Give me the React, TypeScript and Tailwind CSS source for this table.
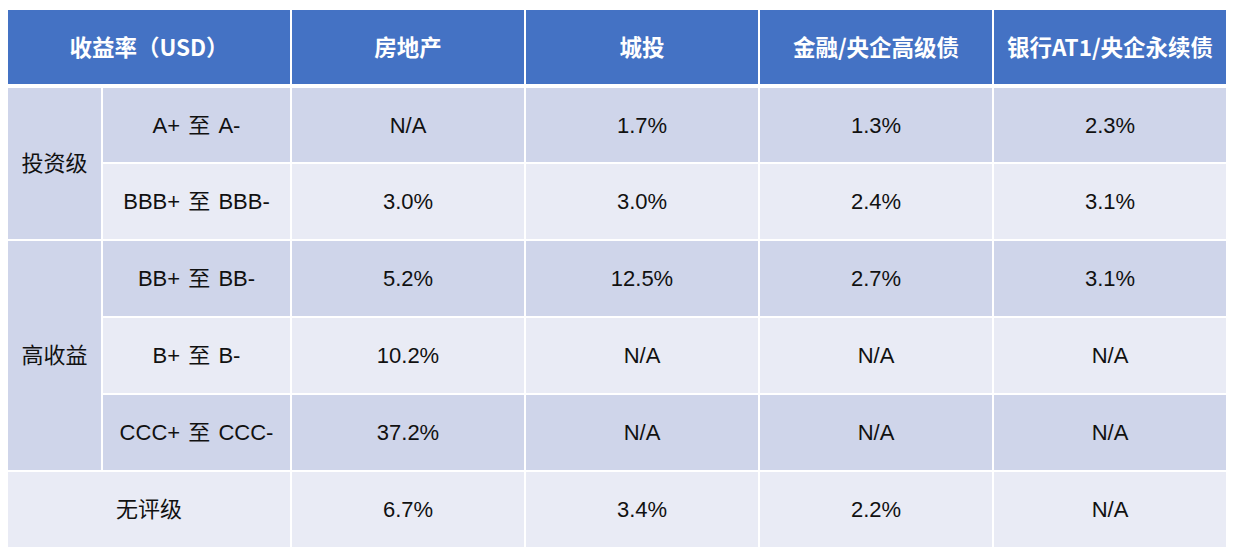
const headers = ["房地产", "城投", "金融/央企高级债", "银行AT1/央企永续债"];

const rows = [
  { label: "A+ 至 A-", values: ["N/A", "1.7%", "1.3%", "2.3%"] },
  { label: "BBB+ 至 BBB-", values: ["3.0%", "3.0%", "2.4%", "3.1%"] },
  { label: "BB+ 至 BB-", values: ["5.2%", "12.5%", "2.7%", "3.1%"] },
  { label: "B+ 至 B-", values: ["10.2%", "N/A", "N/A", "N/A"] },
  { label: "CCC+ 至 CCC-", values: ["37.2%", "N/A", "N/A", "N/A"] },
];

const font = { fontFamily: '"Liberation Sans", "Noto Sans CJK SC", sans-serif' };
const headFont = { fontFamily: '"Noto Sans CJK SC", sans-serif' };

function rowBg(i: number) {
  return i % 2 === 0 ? "bg-[#cfd5ea]" : "bg-[#e9ebf5]";
}

function Label({ text }: { text: string }) {
  const [from, to] = text.split(" 至 ");
  return (
    <span className="whitespace-pre">
      {from} <span className="px-[2px]">至</span> {to}
    </span>
  );
}

export default function App() {
  return (
    <div className="w-[1238px] h-[558px] bg-white pt-[10px] pl-[8px]" style={font}>
      <div
        className="grid grid-cols-[93px_187px_232px_232px_232px_232px] gap-x-[2px] mb-[4px]"
        style={headFont}
      >
        <div className="col-span-2 h-[74px] bg-[#4472c4] flex items-center justify-center text-white text-[22.5px] font-bold">
          收益率（USD）
        </div>
        {headers.map((h) => (
          <div key={h} className="h-[74px] bg-[#4472c4] flex items-center justify-center text-white text-[22.5px] font-bold">
            {h}
          </div>
        ))}
      </div>
      <div className="grid grid-cols-[93px_187px_232px_232px_232px_232px] grid-rows-[74px_75px_75px_75px_75px_75px] gap-x-[2px] gap-y-[2px] text-[22px] text-[#111]">
        <div className="row-span-2 bg-[#cfd5ea] flex items-center justify-center">投资级</div>
        <div className={`${rowBg(0)} flex items-center justify-center`}><Label text={rows[0].label} /></div>
        {rows[0].values.map((v, j) => (
          <div key={j} className={`${rowBg(0)} flex items-center justify-center`}>{v}</div>
        ))}
        <div className={`${rowBg(1)} flex items-center justify-center`}><Label text={rows[1].label} /></div>
        {rows[1].values.map((v, j) => (
          <div key={j} className={`${rowBg(1)} flex items-center justify-center`}>{v}</div>
        ))}
        <div className="row-span-3 bg-[#cfd5ea] flex items-center justify-center">高收益</div>
        {rows.slice(2).map((r, k) => (
          <>
            <div key={`l${k}`} className={`${rowBg(k + 2)} flex items-center justify-center`}><Label text={r.label} /></div>
            {r.values.map((v, j) => (
              <div key={`${k}-${j}`} className={`${rowBg(k + 2)} flex items-center justify-center`}>{v}</div>
            ))}
          </>
        ))}
        <div className="col-span-2 bg-[#e9ebf5] flex items-center justify-center">无评级</div>
        {["6.7%", "3.4%", "2.2%", "N/A"].map((v, j) => (
          <div key={`u${j}`} className="bg-[#e9ebf5] flex items-center justify-center">{v}</div>
        ))}
      </div>
    </div>
  );
}
